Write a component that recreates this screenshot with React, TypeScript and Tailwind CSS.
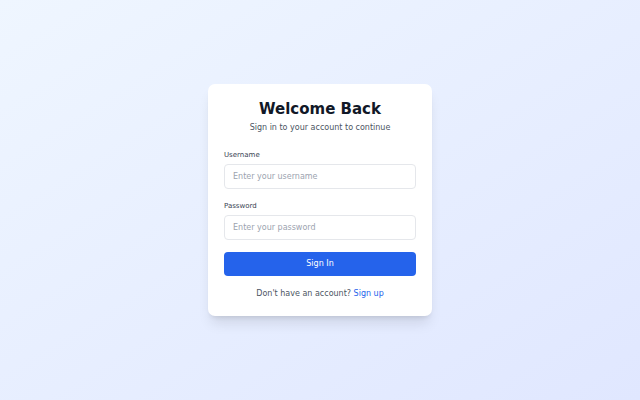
import { useState } from "react"

export default function App() {
  const [username, setUsername] = useState("")
  const [password, setPassword] = useState("")

  return (
    <div className="min-h-screen w-full flex items-center justify-center bg-gradient-to-br from-[#eff6ff] to-[#e0e7ff] font-['DejaVu_Sans',sans-serif]">
      <div className="w-[224px] bg-white rounded-[7px] p-[16px] shadow-[0_10px_13px_-3px_rgba(0,0,0,0.1),0_4px_5px_-3px_rgba(0,0,0,0.1)]">
        {/* Header */}
        <div className="text-center mb-[16px]">
          <h1 className="text-[15px] leading-[18px] font-bold text-[#111827]">Welcome Back</h1>
          <p className="mt-[4px] text-[8px] leading-[12px] text-[#4b5563]">
            Sign in to your account to continue
          </p>
        </div>

        <form className="flex flex-col gap-[12px]" onSubmit={(e) => e.preventDefault()}>
          <div>
            <label className="block mb-[4px] text-[7px] leading-[10px] font-medium text-[#374151]">
              Username
            </label>
            <input
              type="text"
              value={username}
              onChange={(e) => setUsername(e.target.value)}
              placeholder="Enter your username"
              className="block w-full h-[25px] px-[8px] text-[8px] leading-[12px] border border-[#e5e7eb] rounded-[4px] text-[#111827] placeholder:text-[#9ca3af] outline-none"
            />
          </div>

          <div>
            <label className="block mb-[4px] text-[7px] leading-[10px] font-medium text-[#374151]">
              Password
            </label>
            <input
              type="password"
              value={password}
              onChange={(e) => setPassword(e.target.value)}
              placeholder="Enter your password"
              className="block w-full h-[25px] px-[8px] text-[8px] leading-[12px] border border-[#e5e7eb] rounded-[4px] text-[#111827] placeholder:text-[#9ca3af] outline-none"
            />
          </div>

          <button
            type="submit"
            className="w-full h-[24px] bg-[#2563eb] text-white text-[8px] leading-[12px] font-medium rounded-[4px]"
          >
            Sign In
          </button>
        </form>

        <p className="mt-[12px] text-center text-[8px] leading-[12px] text-[#4b5563]">
          Don't have an account? <a href="#" className="text-[#2563eb] font-medium">Sign up</a>
        </p>
      </div>
    </div>
  )
}
